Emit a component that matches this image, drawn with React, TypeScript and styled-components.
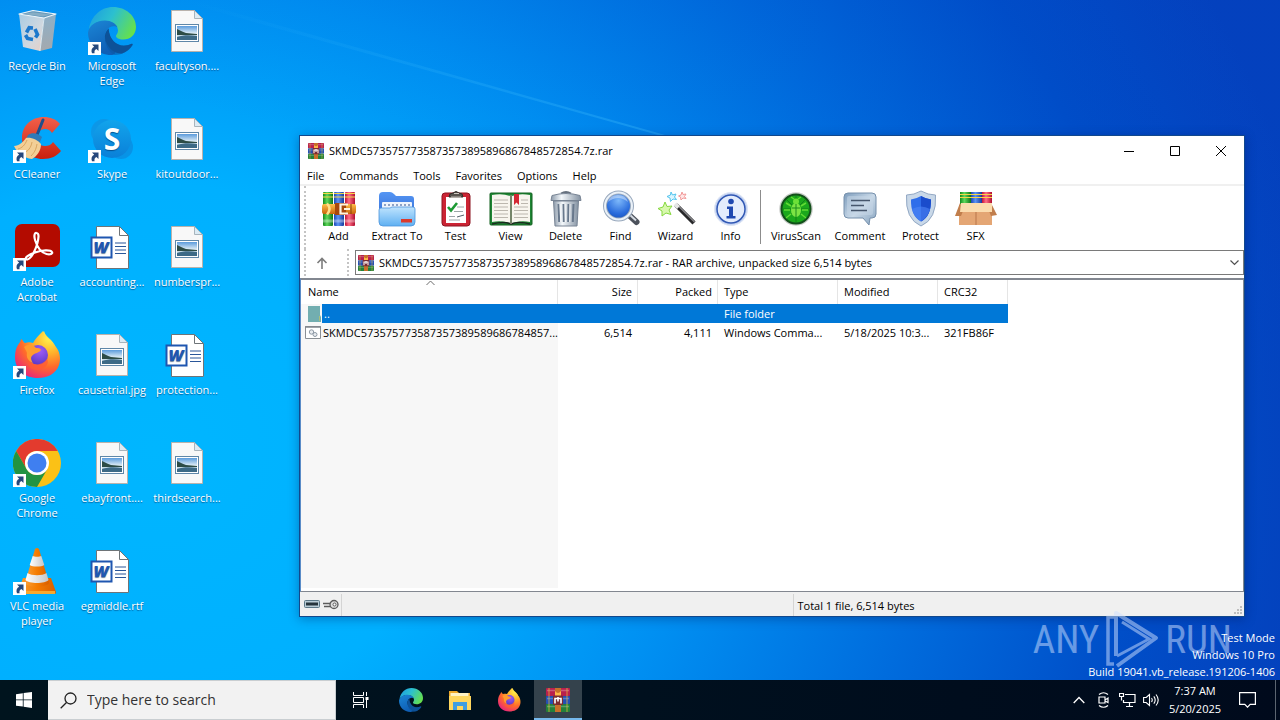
import React from "react";
import styled, { createGlobalStyle } from "styled-components";

const GlobalStyle = createGlobalStyle`
  * { box-sizing: border-box; }
  html, body { margin: 0; padding: 0; }
  body, button, select, input, table {
    font-family: "Open Sans", "Noto Sans", sans-serif;
    font-size: 11px;
    line-height: 15px;
  }
  button { border: 0; padding: 0; margin: 0; background: none; color: inherit; cursor: default; }
  svg { display: block; flex: none; }
`;

/* ---------- Desktop ---------- */

const Screen = styled.div`
  position: relative;
  display: flex;
  flex-direction: column;
  height: 100vh;
  overflow: hidden;
`;

const Desktop = styled.main`
  position: relative;
  flex: 1;
  min-height: 0;
  background:
    linear-gradient(16deg, transparent 60%, rgba(0, 70, 200, 0.16) 90%),
    radial-gradient(ellipse 92% 150% at 12% 66%, #00b6ff 0%, #00b0ff 26%, #0090f2 46%, #006cdd 66%, #004ec8 84%, #0440bc 100%);
`;

const LightRays = styled.svg`
  position: absolute;
  inset: 0;
  width: 100%;
  height: 100%;
`;

const IconGrid = styled.div`
  position: relative;
  display: grid;
  grid-auto-flow: column;
  grid-template-rows: repeat(6, 108px);
  grid-auto-columns: 74px;
  column-gap: 1px;
  justify-content: start;
`;

const DesktopIcon = styled.button`
  display: flex;
  flex-direction: column;
  align-items: center;
  gap: 3px;
  padding-top: 7px;
  color: #fff;
  text-shadow: 0 1px 1px rgba(0, 40, 90, 0.6);
`;

const IconArt = styled.span`
  position: relative;
  width: 48px;
  height: 48px;
`;

const ShortcutMark = styled.svg`
  position: absolute;
  left: 0;
  bottom: 0;
`;

const IconLabel = styled.span`
  white-space: pre;
  text-align: center;
`;

/* ---------- Archive window ---------- */

const Window = styled.section`
  position: absolute;
  top: 135px;
  left: 299px;
  right: 35px;
  bottom: 63px;
  display: flex;
  flex-direction: column;
  background: #fff;
  border: 1px solid #12488c;
  color: #000;
  box-shadow: 0 2px 10px rgba(0, 20, 80, 0.35);
`;

const TitleBar = styled.header`
  display: flex;
  align-items: center;
  height: 29px;
  padding-left: 8px;
`;

const Title = styled.h1`
  flex: 1;
  margin: 0;
  padding-left: 5px;
  font-size: 11px;
  font-weight: 400;
`;

const CaptionButton = styled.button`
  display: flex;
  align-items: center;
  justify-content: center;
  width: 46px;
  height: 29px;
`;

const MenuBar = styled.nav`
  display: flex;
  gap: 15px;
  height: 21px;
  padding: 3px 7px 0;
  border-bottom: 2px solid #f0f0f0;
`;

const MenuItem = styled.button`
  height: 15px;
`;

const ToolbarRow = styled.div`
  display: flex;
  align-items: center;
  height: 63px;
  margin-left: 4px;
  padding: 0 0 2px 5px;
  border-left: 2px dotted #c4c4c4;
`;

const ToolButton = styled.button<{ $width?: number }>`
  display: flex;
  flex-direction: column;
  align-items: center;
  width: ${(p) => p.$width ?? 55}px;
`;

const ToolDivider = styled.span`
  width: 1px;
  height: 54px;
  margin: 0 4px 0 2px;
  background: #8c8c8c;
`;

const AddressRow = styled.div`
  display: flex;
  align-items: center;
  height: 27px;
  margin-left: 4px;
  border-left: 2px dotted #c4c4c4;
`;

const UpButton = styled.button`
  display: flex;
  align-items: center;
  justify-content: center;
  width: 32px;
  height: 24px;
`;

const AddressGrip = styled.span`
  align-self: stretch;
  width: 8px;
  margin-left: 9px;
  border-left: 2px dotted #c4c4c4;
`;

const AddressBox = styled.div`
  flex: 1;
  display: flex;
  align-items: center;
  height: 25px;
  padding: 0 4px 0 2px;
  border: 1px solid #7a7a7a;
`;

const AddressSelect = styled.select`
  flex: 1;
  height: 20px;
  padding: 0 5px;
  border: 0;
  outline: 0;
  appearance: none;
  background: transparent;
  color: #000;
`;

const ListPane = styled.div`
  flex: 1;
  min-height: 0;
  margin-top: 2px;
  overflow: hidden;
  border: 1px solid #828790;
  border-left-color: #5a8cc8;
  border-top: 2px solid #828790;
  background: linear-gradient(#f7f7f7, #f7f7f7) 0 0 / 257px calc(100% - 3px) no-repeat #fff;
`;

const FileTable = styled.table`
  width: 707px;
  table-layout: fixed;
  border-spacing: 0;
`;

const HeadCell = styled.th<{ $align?: string; $sorted?: boolean }>`
  position: relative;
  height: 24px;
  padding: ${(p) => (p.$sorted ? "0 7px 2px" : "0 5px 2px 6px")};
  border-right: 1px solid #e5e5e5;
  background: #fff;
  font-weight: 400;
  text-align: ${(p) => p.$align ?? "left"};
`;

const SortMark = styled.svg`
  position: absolute;
  top: 0;
  left: 125px;
`;

const FileRow = styled.tr<{ $selected?: boolean }>`
  height: 19px;
  color: ${(p) => (p.$selected ? "#fff" : "#000")};
  background: ${(p) => (p.$selected ? "#0078d7" : "transparent")};
`;

const Cell = styled.td<{ $align?: string }>`
  padding: 0 6px;
  overflow: hidden;
  white-space: nowrap;
  text-overflow: ellipsis;
  text-align: ${(p) => p.$align ?? "left"};
`;

const NameCell = styled.td`
  padding: 0;
`;

const NameContent = styled.div`
  display: flex;
  align-items: center;
  height: 19px;
`;

const NameIcon = styled.span`
  display: flex;
  align-items: center;
  justify-content: flex-end;
  width: 21px;
  height: 19px;
  background: #f7f7f7;
`;

const NameText = styled.span`
  flex: 1;
  padding-left: 2px;
  white-space: nowrap;
`;

const StatusBar = styled.footer`
  display: flex;
  align-items: stretch;
  height: 24px;
  padding-top: 2px;
  background: #f0f0f0;
`;

const StatusIcons = styled.div`
  display: flex;
  gap: 3px;
  width: 42px;
  padding: 5px 0 0 4px;
  border-right: 1px solid #d4d4d4;
`;

const StatusPart = styled.div`
  flex: 1;
  display: flex;
  align-items: center;
  justify-content: space-between;
  padding-left: 4px;
  & + & { border-left: 1px solid #d4d4d4; }
`;

const SizeGrip = styled.svg`
  align-self: flex-end;
`;

/* ---------- Watermarks ---------- */

const Brand = styled.div`
  position: absolute;
  right: 48px;
  bottom: 10px;
  display: flex;
  align-items: center;
  gap: 6px;
  height: 60px;
  color: #cfe0ff;
  opacity: 0.5;
  font-family: "Roboto Condensed", "Liberation Sans Narrow", Roboto, sans-serif;
  font-size: 39px;
  font-weight: 400;
  line-height: 60px;
`;

const BuildInfo = styled.div`
  position: absolute;
  right: 5px;
  bottom: 0;
  color: #fff;
  text-align: right;
  line-height: 17px;
`;

/* ---------- Taskbar ---------- */

const Taskbar = styled.footer`
  display: flex;
  align-items: stretch;
  height: 40px;
  background: linear-gradient(to right, #00141e, #00101e 50%, #000a1c);
  color: #fff;
`;

const TaskButton = styled.button<{ $active?: boolean }>`
  display: flex;
  align-items: center;
  justify-content: center;
  width: 48px;
  border-bottom: 2px solid ${(p) => (p.$active ? "#76b9ed" : "transparent")};
  border-top: 2px solid ${(p) => (p.$active ? "#34424c" : "transparent")};
  background: ${(p) => (p.$active ? "#34424c" : "transparent")};
`;

const SearchBox = styled.label`
  display: flex;
  align-items: center;
  gap: 10px;
  width: 288px;
  padding-left: 12px;
  background: #f2f2f2;
  border: 1px solid #c9ced1;
  border-left: 0;
`;

const SearchInput = styled.input`
  flex: 1;
  min-width: 0;
  padding: 0;
  border: 0;
  outline: 0;
  background: transparent;
  font-size: 14px;
  line-height: 20px;
  &::placeholder { color: #333; opacity: 1; }
`;

const TaskApps = styled.div`
  flex: 1;
  display: flex;
  gap: 1px;
  padding-left: 3px;
`;

const Tray = styled.div`
  display: flex;
  align-items: stretch;
`;

const TrayButton = styled.button`
  display: flex;
  align-items: center;
  justify-content: center;
  width: 24px;
`;

const Clock = styled.button`
  display: flex;
  flex-direction: column;
  align-items: center;
  justify-content: center;
  width: 64px;
  line-height: 18px;
`;

const NotifyButton = styled(TrayButton)`
  width: 49px;
  border-right: 1px solid #5c6570;
  margin-right: 4px;
  padding-right: 8px;
`;

/* ---------- Desktop art ---------- */

const Shortcut = () => (
  <ShortcutMark width="13" height="13" viewBox="0 0 13 13" aria-hidden="true">
    <rect width="13" height="13" fill="#fff" />
    <path d="M4 2.500h6.500V9L8.400 7C6.600 8 6.200 9.200 6.600 11.300H4C2.800 8.300 3.800 6 6.200 4.800z" fill="#26487c" />
  </ShortcutMark>
);

const RecycleBinArt = () => (
  <svg width="48" height="48" viewBox="0 0 48 48">
    <defs>
      <linearGradient id="binL" x1="0" y1="0" x2="1" y2="1">
        <stop offset="0" stopColor="#a9cbe2" /><stop offset=".6" stopColor="#d0d8e0" /><stop offset="1" stopColor="#e8cfc4" />
      </linearGradient>
      <linearGradient id="binR" x1="0" y1="0" x2="0" y2="1">
        <stop offset="0" stopColor="#8db0c8" /><stop offset="1" stopColor="#a4a9ae" />
      </linearGradient>
    </defs>
    <path d="M6 7 31 10 27 44 10 40z" fill="url(#binL)" />
    <path d="M31 10 43 7 39 41 27 44z" fill="url(#binR)" />
    <path d="M6 7 20 3.500 43 7 31 11z" fill="#5f96bb" stroke="#eef6fb" strokeWidth="1.200" strokeLinejoin="round" />
    <path d="M10 7 20 5.200 38 7.400 30 9.400z" fill="#87adc4" />
    <path d="M31 11 27 44" stroke="#f2f6f8" strokeWidth=".8" />
    <g fill="none" stroke="#1c78cc" strokeWidth="3.600">
      <path d="M13.500 25.500 16.200 20.700 20 21" /><path d="M22 22 24.500 27.500 22.500 30.500" /><path d="M20 32.500 14.500 31.500 12.500 28" />
    </g>
  </svg>
);

const EdgeArt = ({ size = 48 }: { size?: number }) => (
  <svg width={size} height={size} viewBox="0 0 48 48">
    <defs>
      <linearGradient id="edTop" x1="0" y1=".2" x2="1" y2=".6">
        <stop offset="0" stopColor="#1d9fe0" /><stop offset=".45" stopColor="#2cc0cf" /><stop offset="1" stopColor="#66e04c" />
      </linearGradient>
      <linearGradient id="edLeft" x1="0" y1="0" x2=".4" y2="1">
        <stop offset="0" stopColor="#1b86d6" /><stop offset="1" stopColor="#0f5fb5" />
      </linearGradient>
    </defs>
    <path d="M1 22C3 9 13 0 25 0 38 0 48 9 48 20c0 8-6 12.500-12.500 12.500-5 0-7.500-1.800-7.500-3.500 0-1.300 2-2.500 2-5.500 0-5-5.500-9.500-13-9.500C9 14 3.500 17.500 1 22z" fill="url(#edTop)" />
    <path d="M17 13.500c6 0 11 3 12.600 7-3-2.500-9.600-1-11.600 4-3 7.500 2 15.500 9 19 1.500 2.500-1 4.500-4 4.500C10 48 0 37.500 0 25.500 1 19 8 13.500 17 13.500z" fill="url(#edLeft)" />
    <path d="M20.500 21.500C17 25 16 30 18 35c3 7.500 9.500 12 16 11.500 4.500-1.500 8.500-5 10.500-8.500.6-1.200-.6-1.600-1.500-1-9.500 4.500-21 0-22.500-15.500z" fill="#114a8b" />
    <path d="M20.500 21.500c.5 13 10.500 20.500 22.500 15.500l1.500 1c-3 5.500-10 10-18 10-2-1-7-5-9-12-1.500-6 .5-11.500 3-14.500z" fill="#0c59a4" opacity=".6" />
  </svg>
);

const CCleanerArt = () => (
  <svg width="48" height="48" viewBox="0 0 48 48">
    <defs>
      <linearGradient id="ccR" x1="0" y1="0" x2="0" y2="1">
        <stop offset="0" stopColor="#f2604a" /><stop offset="1" stopColor="#c8200e" />
      </linearGradient>
    </defs>
    <path d="M47 9C43 4 37 2 31 2 18 2 9 11 9 23s8 21 21 21c8 0 14-3 18-8l-8-9c-2 3-5 4-8 4-5 0-8-3-8-8s3-9 8-9c3 0 5 1 7 4z" fill="url(#ccR)" />
    <path d="m30 5-6 15" stroke="#1f4f8c" strokeWidth="3" strokeLinecap="round" />
    <path d="M15 20c4-3 10-2 14 2l-3 7-13-5z" fill="#2f7ab8" />
    <path d="M13 23c5-1 12 2 15 6 0 7-4 12-9 15C11 43 4 38 1 31c5 0 9-4 12-8z" fill="#f3cf96" />
    <path d="M14 25c-2 5-5 8-9 9M19 27c-1 6-4 9-8 11M24 29c-1 6-3 9-6 12" stroke="#d9a560" fill="none" />
  </svg>
);

const SkypeArt = () => (
  <svg width="48" height="48" viewBox="0 0 48 48">
    <defs>
      <linearGradient id="sky" x1="0" y1="0" x2="0" y2="1">
        <stop offset="0" stopColor="#12a4ec" /><stop offset="1" stopColor="#0a80d8" />
      </linearGradient>
    </defs>
    <circle cx="16" cy="17" r="13" fill="#0f94e2" opacity=".8" />
    <circle cx="33" cy="32" r="12" fill="#0a8de0" opacity=".8" />
    <circle cx="24" cy="24" r="19" fill="url(#sky)" />
    <text x="24" y="35" textAnchor="middle" fontFamily="Open Sans, sans-serif" fontWeight="700" fontSize="30" fill="#fff">S</text>
  </svg>
);

const AcrobatArt = () => (
  <svg width="48" height="48" viewBox="0 0 48 48">
    <rect x="2" y="1" width="45" height="43" rx="7" fill="#b30b00" />
    <path d="M23.500 10c-2-.5-2.800 3-1.300 7.500 2 6.500 5.500 12 11.300 13.500 4 1 6.500-.5 5.500-2-1.500-2.500-10-2-17 .5-7 2.300-10 5-9 6.500 1.200 1.800 5-.8 8-7 2.500-5 4.300-11.500 4.500-15.500.1-2-.8-3.300-2-3.500z" fill="none" stroke="#fff" strokeWidth="2.200" strokeLinejoin="round" />
  </svg>
);

const FirefoxArt = ({ size = 48 }: { size?: number }) => (
  <svg width={size} height={size} viewBox="0 0 48 48">
    <defs>
      <radialGradient id="ffBody" cx=".75" cy=".15" r=".95">
        <stop offset="0" stopColor="#fff44f" /><stop offset=".35" stopColor="#ffb02a" /><stop offset=".65" stopColor="#ff6a2b" /><stop offset="1" stopColor="#e8247c" />
      </radialGradient>
      <radialGradient id="ffCore" cx=".6" cy=".3" r=".7">
        <stop offset="0" stopColor="#a05cf5" /><stop offset="1" stopColor="#5b3ac8" />
      </radialGradient>
    </defs>
    <path d="M31 0c-4 4-5 7-4 11l12 8c2 2 3 4 4 1 0-4-2-8-5-11-3-3-6-5-7-9z" fill="#ffe14a" />
    <path d="M5 14C7 11 8 10 8 8c2 1 3 4 4 4 3-1 5-1 8 0 2-4 6-8 10-12 1 7 9 9 13 16 4 5 5 12 3 18-3 9-12 13-21 13C11 47 2 38 2 26c0-5 1-9 3-12z" fill="url(#ffBody)" />
    <circle cx="25" cy="24" r="10" fill="url(#ffCore)" />
    <path d="M11 16c4-3 9-3 12 1 2 0 4 0 5 2-2 3-6 3-8 5-3 2-2 5 0 8-5-2-7-6-6-10-1-3-2-4-3-6z" fill="#ff9b2e" />
    <path d="M15 29c4 6 14 6 19-1 3 4-2 11-10 11-6 0-10-4-9-10z" fill="#ff5b36" opacity=".75" />
  </svg>
);

const ChromeArt = () => (
  <svg width="48" height="48" viewBox="0 0 48 48">
    <circle cx="24" cy="24" r="24" fill="#fbc116" />
    <path d="M3.200 12A24 24 0 0 1 44.800 12H24a12 12 0 0 0-10.400 18z" fill="#e33b2e" />
    <path d="M3.200 12A24 24 0 0 0 24 48l10.400-18a12 12 0 0 1-20.800 0z" fill="#229342" />
    <circle cx="24" cy="24" r="12" fill="#fff" />
    <circle cx="24" cy="24" r="9.500" fill="#3f7ff0" />
  </svg>
);

const VlcArt = () => (
  <svg width="48" height="48" viewBox="0 0 48 48">
    <defs>
      <linearGradient id="vlc" x1="0" y1="0" x2="1" y2="0">
        <stop offset="0" stopColor="#f9a03a" /><stop offset=".5" stopColor="#f57c00" /><stop offset="1" stopColor="#d85f00" />
      </linearGradient>
      <linearGradient id="vlcW" x1="0" y1="0" x2="1" y2="0">
        <stop offset="0" stopColor="#fff" /><stop offset="1" stopColor="#c6c6c6" />
      </linearGradient>
    </defs>
    <path d="M10 31h28l5 14a2 2 0 0 1-1 2H6a2 2 0 0 1-1-2z" fill="url(#vlc)" />
    <path d="M6 44h36v3H6z" fill="#f8a92e" />
    <path d="M22 2q2-2 4 0l10 34c-3 5-21 5-24 0z" fill="url(#vlc)" />
    <path d="m19.700 9-3 9c3 2 11.600 2 14.600 0l-3-9c-2 1-6.600 1-8.600 0z" fill="url(#vlcW)" />
    <path d="m14.500 26-2 7c3 4 20 4 23 0l-2-7c-4 3-15 3-19 0z" fill="url(#vlcW)" />
  </svg>
);

const PhotoArt = () => (
  <svg width="48" height="48" viewBox="0 0 48 48">
    <defs>
      <linearGradient id="sky2" x1="0" y1="0" x2="0" y2="1">
        <stop offset="0" stopColor="#5b9bdc" /><stop offset=".55" stopColor="#e4f0f6" /><stop offset="1" stopColor="#7fa8c0" />
      </linearGradient>
    </defs>
    <path d="M8.500 3.500h23l8 8v33h-31z" fill="#f8f8f8" stroke="#b9b2ac" />
    <path d="M31.500 3.500v8h8z" fill="#dcebf4" stroke="#a8b4bc" />
    <rect x="12.500" y="17.500" width="23" height="17" fill="#fff" stroke="#5f87a8" />
    <rect x="14" y="19" width="20" height="14" fill="url(#sky2)" />
    <path d="M14 22c3 1 5 3 9 4 4 0 7 1 11 1v1H14z" fill="#2d4c46" />
    <path d="M14 30c6-2 13-2 20-1v4H14z" fill="#3d6a86" />
  </svg>
);

const WordArt = () => (
  <svg width="48" height="48" viewBox="0 0 48 48">
    <path d="M8.500 3.500h23l9 9v33h-32z" fill="#fff" stroke="#6e7478" />
    <path d="M31.500 3.500v9h9z" fill="#fff" stroke="#6e7478" />
    <path d="M27 20h11M27 23.500h11M27 27h11M27 30.500h11" stroke="#2a5699" strokeWidth="1.200" />
    <rect x="3.500" y="14.500" width="20" height="20" fill="#fff" stroke="#1f56b0" strokeWidth="2" />
    <text x="13" y="30" textAnchor="middle" fontFamily="Open Sans, sans-serif" fontStyle="italic" fontWeight="800" fontSize="16" fill="#1f56b0">W</text>
  </svg>
);

/* ---------- Toolbar art ---------- */

const RarArt = ({ size = 16 }: { size?: number }) => (
  <svg width={size} height={size} viewBox="0 0 24 24">
    <rect x="0" y="0" width="24" height="8" rx="1" fill="#b8204c" />
    <rect x="0" y="8" width="24" height="8" rx="1" fill="#2450b4" />
    <rect x="0" y="16" width="24" height="8" rx="1" fill="#23803a" />
    <path d="M1 2.500h22M1 10.500h22M1 18.500h22" stroke="#fff" strokeOpacity=".25" strokeWidth="1.500" />
    <path d="M3 0v24M21 0v24" stroke="#e6b93c" strokeOpacity=".6" strokeWidth="1.200" />
    <rect x="9" y="0" width="6" height="24" fill="#c8702a" />
    <path d="M9 3q3 4 6 0v5H9z" fill="#ffb848" />
    <rect x="7" y="7.500" width="10" height="9.500" rx="1" fill="#7c2c30" />
    <path d="M9 15.500v-5h6v5M12 9v4.500" stroke="#fff" strokeWidth="1.600" fill="none" />
  </svg>
);

const bookDefs = (
  <defs>
    <linearGradient id="bkG" x1="0" y1="0" x2="1" y2="0"><stop offset="0" stopColor="#128a1c" /><stop offset=".4" stopColor="#5fd85c" /><stop offset="1" stopColor="#0e7416" /></linearGradient>
    <linearGradient id="bkB" x1="0" y1="0" x2="1" y2="0"><stop offset="0" stopColor="#1c46b4" /><stop offset=".4" stopColor="#5c94f4" /><stop offset="1" stopColor="#173a9c" /></linearGradient>
    <linearGradient id="bkR" x1="0" y1="0" x2="1" y2="0"><stop offset="0" stopColor="#c01238" /><stop offset=".4" stopColor="#ff6e86" /><stop offset="1" stopColor="#b00e30" /></linearGradient>
    <linearGradient id="bkO" x1="0" y1="0" x2="0" y2="1"><stop offset="0" stopColor="#ffc04a" /><stop offset="1" stopColor="#c8640c" /></linearGradient>
  </defs>
);

const AddArt = () => (
  <svg width="44" height="38" viewBox="0 0 44 38">
    {bookDefs}
    <rect x="6" y="2" width="10" height="34" rx="1" fill="url(#bkG)" />
    <rect x="17" y="2" width="10" height="34" rx="1" fill="url(#bkB)" />
    <rect x="28" y="2" width="10" height="34" rx="1" fill="url(#bkR)" />
    <path d="M6 3.500h10M17 3.500h10M28 3.500h10M6 7h10M17 7h10M28 7h10" stroke="#f6d548" strokeWidth="1.200" />
    <path d="M6 31h10M17 31h10M28 31h10" stroke="#fff" strokeOpacity=".35" strokeWidth="3" />
    <rect x="5" y="14" width="34" height="10" rx="2" fill="url(#bkO)" />
    <path d="M10 13.500q5 5.500 0 11" stroke="#ffe08a" strokeWidth="2.500" fill="none" />
    <rect x="18" y="13" width="11" height="12" fill="#a8480c" />
    <path d="M31 14.500h-7.500v9H31M27 19h6" stroke="#fff4e0" strokeWidth="2.200" fill="none" />
    <path d="M34 14v10" stroke="#8c4208" />
  </svg>
);

const ExtractArt = () => (
  <svg width="44" height="38" viewBox="0 0 44 38">
    <defs>
      <linearGradient id="fdA" x1="0" y1="0" x2="0" y2="1"><stop offset="0" stopColor="#5596f4" /><stop offset="1" stopColor="#2f66d0" /></linearGradient>
      <linearGradient id="fdB" x1="0" y1="0" x2="0" y2="1"><stop offset="0" stopColor="#bfe4fe" /><stop offset="1" stopColor="#5fb0f2" /></linearGradient>
    </defs>
    <path d="M4 6q0-4 4-4h7q2 0 4 2l2 2h15q3 0 3 3v22H4z" fill="url(#fdA)" />
    <rect x="7" y="12" width="30" height="11" rx="1" fill="#eef4fc" />
    <path d="M9 15h26" stroke="#6d86b4" strokeWidth="1.500" strokeDasharray="2 2" />
    <path d="M4 20q0-2 2-2h9l2-1h21q2 0 2 2v13q0 4-4 4H8q-4 0-4-4z" fill="url(#fdB)" stroke="#4b94dc" strokeWidth=".8" />
    <rect x="26" y="29" width="11" height="3.500" fill="#dc3a2c" />
  </svg>
);

const TestArt = () => (
  <svg width="44" height="38" viewBox="0 0 44 38">
    <rect x="8" y="3" width="28" height="33" rx="3" fill="#cc2434" stroke="#8c1420" />
    <path d="M12 7h20v26H12z" fill="#fff" />
    <path d="M15 7q0-4 4-4 3-3 6 0 4 0 4 4z" fill="#57534e" stroke="#302c28" />
    <path d="M17 7h10M20 3.500h5" stroke="#cfc8c0" />
    <path d="m14 17 3 3.500 6-7.500" stroke="#1d9a34" strokeWidth="2.600" fill="none" />
    <path d="M23 17h7M20 21.500h9M15 26.500h6M15 30h11" stroke="#9ca6a8" />
    <path d="m23 27 7-2" stroke="#52606a" />
  </svg>
);

const ViewArt = () => (
  <svg width="44" height="38" viewBox="0 0 44 38">
    <rect x="1" y="3" width="42" height="32" rx="1" fill="#1f8634" stroke="#12601f" />
    <path d="M3 5q10-2 18 1v27q-9-3-18-1zM41 5q-10-2-18 1v27q9-3 18-1z" fill="#f8f5ee" />
    <path d="M3 34q12-3 19 0 8-3 19 0" stroke="#1c2a20" strokeWidth="1.500" fill="none" />
    <path d="M22 5v29" stroke="#8d8678" strokeWidth="1.600" />
    <path d="M5 10h14M5 13.500h14M5 17h14M5 20.500h14M5 24h14M5 27.500h14M25 17h14M25 20.500h14M25 24h14M25 27.500h14M32 10h7M32 13.500h7" stroke="#b4b0a6" strokeWidth=".9" />
    <path d="M25 4h5v11l-2.500-2.500L25 15z" fill="#d42834" />
  </svg>
);

const DeleteArt = () => (
  <svg width="44" height="38" viewBox="0 0 44 38">
    <defs>
      <linearGradient id="can" x1="0" y1="0" x2="1" y2="0"><stop offset="0" stopColor="#8c9aaa" /><stop offset=".35" stopColor="#f4f8fb" /><stop offset="1" stopColor="#8492a2" /></linearGradient>
    </defs>
    <path d="M17 3.500q5-3 10 0" stroke="#66717e" strokeWidth="2" fill="none" />
    <path d="M8 5.500q14-4 28 0l1 5H7z" fill="url(#can)" stroke="#788494" />
    <path d="M9.500 11h25l-1.500 25h-22z" fill="url(#can)" stroke="#788494" />
    <path d="m14.500 14 .7 18M19.500 14l.3 18M24.500 14l-.3 18M29.500 14l-.7 18" stroke="#68788c" strokeWidth="2" />
    <path d="m16 14 .7 18M21 14l.3 18M26 14l-.3 18" stroke="#fff" strokeWidth=".8" />
  </svg>
);

const FindArt = () => (
  <svg width="44" height="38" viewBox="0 0 44 38">
    <defs>
      <radialGradient id="lens" cx=".5" cy=".3" r=".8"><stop offset="0" stopColor="#7db8fa" /><stop offset=".6" stopColor="#2a6cdc" /><stop offset="1" stopColor="#0f48b0" /></radialGradient>
    </defs>
    <path d="m31 26 6.500 6" stroke="#4c525c" strokeWidth="6" strokeLinecap="round" />
    <path d="m30 24 7 6.500" stroke="#d4dae2" strokeWidth="2" />
    <circle cx="19.500" cy="16" r="13.500" fill="url(#lens)" stroke="#98a8bc" strokeWidth="4" />
    <circle cx="19.500" cy="16" r="13.500" fill="none" stroke="#eaf1f8" strokeWidth="2" />
    <path d="M9 12q10-8 20 0-2-7-10-7t-10 7z" fill="#fff" opacity=".4" />
  </svg>
);

const WizardArt = () => (
  <svg width="44" height="38" viewBox="0 0 44 38">
    <path d="m22 15 18 18" stroke="#28282a" strokeWidth="4.500" />
    <path d="m22.500 14 18 18" stroke="#8d8d90" strokeWidth="1.200" />
    <path d="m21 14 3.500 3.500" stroke="#e6e6e6" strokeWidth="4" />
    <path d="m11 12 2 4.500 5-.5-3 4 2 4.500-5-1.500-4 3v-5l-4-2.500 5-1.500z" fill="#d8f8ae" stroke="#86d840" />
    <path d="m17 2 1.500 3 3.500-1-1.500 3 2 2.500-3.500-.5-2.500 2.500-.5-3.500-3-1.500 3.500-1.500z" fill="#dcf6ff" stroke="#52c4ee" />
    <path d="m28 2 1 2.500 3-.5-1.500 2.500 1.500 2-3-.5-2 2-.5-3-2-1 2.500-1z" fill="#ffe6e6" stroke="#f29a9a" />
  </svg>
);

const InfoArt = () => (
  <svg width="44" height="38" viewBox="0 0 44 38">
    <circle cx="22" cy="19" r="16.500" fill="#c3d2f2" stroke="#dfe6f4" />
    <circle cx="22" cy="19" r="14" fill="#e4ecfc" stroke="#3158b4" strokeWidth="1.500" />
    <circle cx="22" cy="11.500" r="2.800" fill="#1f48b0" />
    <path d="M18 16.500h6v9.500h2.500v2.500h-9V26H20v-7h-2z" fill="#1f48b0" />
  </svg>
);

const VirusArt = () => (
  <svg width="44" height="38" viewBox="0 0 44 38">
    <circle cx="22" cy="19" r="15.500" fill="#1ba81c" stroke="#c9ccc9" strokeWidth="2.500" />
    <circle cx="22" cy="19" r="14.500" fill="none" stroke="#12501a" strokeWidth="2" />
    <path d="M22 5v28M8 19h28M12 9l20 20M32 9 12 29" stroke="#0f7a14" strokeWidth=".8" />
    <ellipse cx="22" cy="20" rx="5" ry="7" fill="#7ce444" />
    <circle cx="22" cy="11.500" r="3" fill="#6ce038" />
    <path d="M17 16l-5-3M16 20h-6M17 24l-5 4M27 16l5-3M28 20h6M27 24l5 4M20 9l-3-2M24 9l3-2" stroke="#62dc34" strokeWidth="1.500" />
    <path d="M22 14v13M18 18h8" stroke="#1b8c1c" />
  </svg>
);

const CommentArt = () => (
  <svg width="44" height="38" viewBox="0 0 44 38">
    <defs>
      <linearGradient id="cm" x1="0" y1="0" x2="1" y2="1"><stop offset="0" stopColor="#7d9cbc" /><stop offset=".5" stopColor="#c9d9e8" /><stop offset="1" stopColor="#85a2be" /></linearGradient>
    </defs>
    <path d="M10 3h24q4 0 4 4v17q0 4-4 4l-2 0-1 7-6-7H10q-4 0-4-4V7q0-4 4-4z" fill="url(#cm)" stroke="#7690ac" />
    <rect x="9" y="6" width="26" height="19" rx="2" fill="#c4d6e6" opacity=".55" />
    <path d="M13 10.500h19M13 15.500h13M13 20.500h16" stroke="#46566c" strokeWidth="1.700" />
  </svg>
);

const ProtectArt = () => (
  <svg width="44" height="38" viewBox="0 0 44 38">
    <path d="M22 1q7 4 14.500 4 1.500 24-14.500 31Q6 29 7.500 5 15 5 22 1z" fill="#c9d8e8" stroke="#92a8c4" />
    <path d="M22 6q5 3 10 3.500Q32.500 26 22 31.500 11.500 26 12 9.500 17 9 22 6z" fill="#2f6eea" />
    <path d="M22 6q5 3 10 3.500Q32.500 26 22 31.500z" fill="#1a4ccc" />
    <path d="M13 19q9-5 18 0-2 8-9 12.500Q15 27 13 19z" fill="#4f86f6" opacity=".6" />
  </svg>
);

const SfxArt = () => (
  <svg width="44" height="38" viewBox="0 0 44 38">
    {bookDefs}
    <rect x="6" y="2" width="11" height="14" fill="url(#bkG)" />
    <rect x="17" y="2" width="11" height="14" fill="url(#bkB)" />
    <rect x="28" y="2" width="10" height="14" fill="url(#bkR)" />
    <path d="M6 4.500h32M6 7.500h32" stroke="#f6d548" strokeWidth="1" />
    <path d="m5 15 5-2h28l-1 22H5z" fill="#dca070" />
    <path d="M5 20h33v15H5z" fill="#e4a674" />
    <path d="m6 13-5 13h6l2-5zM37 13l6 12-6 1-2-5z" fill="#c17e4c" />
    <path d="M7 13h31v9H6z" fill="#fbdcae" />
    <path d="M22 22v13" stroke="#b9764a" />
  </svg>
);

/* ---------- Data ---------- */

type Item = { label: string; art: React.ReactNode; shortcut?: boolean };

const desktopItems: Item[] = [
  { label: "Recycle Bin", art: <RecycleBinArt /> },
  { label: "CCleaner", art: <CCleanerArt />, shortcut: true },
  { label: "Adobe\nAcrobat", art: <AcrobatArt />, shortcut: true },
  { label: "Firefox", art: <FirefoxArt />, shortcut: true },
  { label: "Google\nChrome", art: <ChromeArt />, shortcut: true },
  { label: "VLC media\nplayer", art: <VlcArt />, shortcut: true },
  { label: "Microsoft\nEdge", art: <EdgeArt />, shortcut: true },
  { label: "Skype", art: <SkypeArt />, shortcut: true },
  { label: "accounting...", art: <WordArt /> },
  { label: "causetrial.jpg", art: <PhotoArt /> },
  { label: "ebayfront....", art: <PhotoArt /> },
  { label: "egmiddle.rtf", art: <WordArt /> },
  { label: "facultyson....", art: <PhotoArt /> },
  { label: "kitoutdoor...", art: <PhotoArt /> },
  { label: "numberspr...", art: <PhotoArt /> },
  { label: "protection...", art: <WordArt /> },
  { label: "thirdsearch...", art: <PhotoArt /> },
];

type Tool = { label: string; art: React.ReactNode; width?: number };

const archiveTools: Tool[] = [
  { label: "Add", art: <AddArt /> },
  { label: "Extract To", art: <ExtractArt />, width: 62 },
  { label: "Test", art: <TestArt /> },
  { label: "View", art: <ViewArt /> },
  { label: "Delete", art: <DeleteArt /> },
  { label: "Find", art: <FindArt /> },
  { label: "Wizard", art: <WizardArt /> },
  { label: "Info", art: <InfoArt /> },
];

const extraTools: Tool[] = [
  { label: "VirusScan", art: <VirusArt />, width: 62 },
  { label: "Comment", art: <CommentArt />, width: 66 },
  { label: "Protect", art: <ProtectArt /> },
  { label: "SFX", art: <SfxArt /> },
];

const menus = ["File", "Commands", "Tools", "Favorites", "Options", "Help"];

const archiveName = "SKMDC5735757735873573895896867848572854.7z.rar";

const renderTool = (t: Tool) => (
  <ToolButton key={t.label} $width={t.width}>
    {t.art}
    {t.label}
  </ToolButton>
);

/* ---------- Sections ---------- */

const ArchiveWindow = () => (
  <Window aria-label={archiveName}>
    <TitleBar>
      <RarArt />
      <Title>{archiveName}</Title>
      <CaptionButton aria-label="Minimize">
        <svg width="10" height="10" viewBox="0 0 10 10"><path d="M0 5.500h10" stroke="#000" /></svg>
      </CaptionButton>
      <CaptionButton aria-label="Maximize">
        <svg width="10" height="10" viewBox="0 0 10 10"><path d="M.5.5h9v9h-9z" stroke="#000" fill="none" /></svg>
      </CaptionButton>
      <CaptionButton aria-label="Close">
        <svg width="10" height="10" viewBox="0 0 10 10"><path d="m0 0 10 10M10 0 0 10" stroke="#000" /></svg>
      </CaptionButton>
    </TitleBar>
    <MenuBar>
      {menus.map((m) => <MenuItem key={m}>{m}</MenuItem>)}
    </MenuBar>
    <ToolbarRow>
      {archiveTools.map(renderTool)}
      <ToolDivider />
      {extraTools.map(renderTool)}
    </ToolbarRow>
    <AddressRow>
      <UpButton aria-label="Up one level">
        <svg width="12" height="12" viewBox="0 0 12 12"><path d="M6 12V1.500M1.500 6 6 1.500 10.500 6" stroke="#7c7c7c" strokeWidth="1.600" fill="none" /></svg>
      </UpButton>
      <AddressGrip />
      <AddressBox>
        <RarArt />
        <AddressSelect aria-label="Archive path">
          <option>{archiveName} - RAR archive, unpacked size 6,514 bytes</option>
        </AddressSelect>
        <svg width="9" height="6" viewBox="0 0 9 6"><path d="m.5.5 4 4 4-4" stroke="#505050" strokeWidth="1.200" fill="none" /></svg>
      </AddressBox>
    </AddressRow>
    <ListPane>
      <FileTable>
        <colgroup>
          <col width="257" /><col width="80" /><col width="80" /><col width="120" /><col width="100" /><col width="70" />
        </colgroup>
        <thead>
          <tr>
            <HeadCell $sorted>
              Name
              <SortMark width="9" height="6" viewBox="0 0 9 6"><path d="m.5 5 4-4 4 4" stroke="#6c6c6c" fill="none" /></SortMark>
            </HeadCell>
            <HeadCell $align="right">Size</HeadCell>
            <HeadCell $align="right">Packed</HeadCell>
            <HeadCell>Type</HeadCell>
            <HeadCell>Modified</HeadCell>
            <HeadCell>CRC32</HeadCell>
          </tr>
        </thead>
        <tbody>
          <FileRow $selected>
            <NameCell>
              <NameContent>
                <NameIcon>
                  <svg width="15" height="16" viewBox="0 0 15 16"><path d="M1 0h12v9l1 2v5H1z" fill="#72aeb0" /><path d="M12.500 10v5" stroke="#a8bf7a" /></svg>
                </NameIcon>
                <NameText>..</NameText>
              </NameContent>
            </NameCell>
            <Cell /><Cell /><Cell>File folder</Cell><Cell /><Cell />
          </FileRow>
          <FileRow>
            <NameCell>
              <NameContent>
                <NameIcon>
                  <svg width="16" height="13" viewBox="0 0 16 13">
                    <path d="M.5.5h15v12H.5z" fill="#fff" stroke="#8a8f94" />
                    <path d="M0 1h16" stroke="#80868c" strokeWidth="1.500" />
                    <circle cx="6.500" cy="6" r="2.200" stroke="#8f9aa6" fill="#e8ecf0" /><circle cx="10" cy="8.500" r="2" stroke="#8f9aa6" fill="#e8ecf0" />
                  </svg>
                </NameIcon>
                <NameText>SKMDC573575773587357389589686784857...</NameText>
              </NameContent>
            </NameCell>
            <Cell $align="right">6,514</Cell>
            <Cell $align="right">4,111</Cell>
            <Cell>Windows Comma...</Cell>
            <Cell>5/18/2025 10:3...</Cell>
            <Cell>321FB86F</Cell>
          </FileRow>
        </tbody>
      </FileTable>
    </ListPane>
    <StatusBar>
      <StatusIcons>
        <svg width="16" height="10" viewBox="0 0 16 10"><rect x=".5" y="1.500" width="15" height="7" rx="1" fill="#b8ccd6" stroke="#5c7888" /><path d="M2 5h12" stroke="#26343c" strokeWidth="3" /></svg>
        <svg width="16" height="11" viewBox="0 0 16 11"><path d="M0 4.500h8M1 7.500h7" stroke="#5c5c5c" strokeWidth="1.500" /><circle cx="11" cy="5.500" r="4" fill="#dedede" stroke="#5c5c5c" strokeWidth="1.300" /><circle cx="11.500" cy="5.500" r="1.500" fill="#fff" stroke="#5c5c5c" /></svg>
      </StatusIcons>
      <StatusPart />
      <StatusPart>
        Total 1 file, 6,514 bytes
        <SizeGrip width="11" height="11" viewBox="0 0 11 11"><path d="M7 1h2v2H7zM4 4h2v2H4zM7 4h2v2H7zM1 7h2v2H1zM4 7h2v2H4zM7 7h2v2H7z" fill="#bdbdbd" /></SizeGrip>
      </StatusPart>
    </StatusBar>
  </Window>
);

const TaskbarSection = () => (
  <Taskbar>
    <TaskButton aria-label="Start">
      <svg width="16" height="16" viewBox="0 0 16 16"><path d="M0 2.200 6.800 1.200v6.300H0zM7.600 1.100 16 0v7.500H7.600zM0 8.300h6.800v6.300L0 13.700zM7.600 8.300H16V16l-8.400-1.200z" fill="#fff" /></svg>
    </TaskButton>
    <SearchBox>
      <svg width="17" height="17" viewBox="0 0 17 17"><circle cx="10.500" cy="6.500" r="5.500" stroke="#222" strokeWidth="1.300" fill="none" /><path d="M6.500 10.500.7 16.300" stroke="#222" strokeWidth="1.300" /></svg>
      <SearchInput type="text" aria-label="Search" placeholder="Type here to search" />
    </SearchBox>
    <TaskButton aria-label="Task View">
      <svg width="17" height="16" viewBox="0 0 17 16"><path d="M1.500 0v3.500h10V0M1.500 16v-3.500h10V16M1.500 5.500h10v5h-10zM14.500 0v4M14.500 8v8" stroke="#fff" fill="none" /><path d="M13.500 5h3v3h-3z" fill="#fff" /></svg>
    </TaskButton>
    <TaskApps>
      <TaskButton aria-label="Microsoft Edge"><EdgeArt size={24} /></TaskButton>
      <TaskButton aria-label="File Explorer">
        <svg width="24" height="24" viewBox="0 0 24 24">
          <path d="M1 3h8l2 2h11v16H1z" fill="#eea92a" />
          <path d="M2.500 5h18v3h-18z" fill="#fff3c4" />
          <path d="M1 8h22v14H1z" fill="#ffd75e" />
          <path d="M5 14h14v8h-4v-4H9v4H5z" fill="#3f9ee0" />
        </svg>
      </TaskButton>
      <TaskButton aria-label="Firefox"><FirefoxArt size={24} /></TaskButton>
      <TaskButton aria-label="WinRAR" $active><RarArt size={24} /></TaskButton>
    </TaskApps>
    <Tray>
      <TrayButton aria-label="Show hidden icons">
        <svg width="12" height="8" viewBox="0 0 12 8"><path d="m.7 7 5.300-5.500L11.300 7" stroke="#fff" strokeWidth="1.300" fill="none" /></svg>
      </TrayButton>
      <TrayButton aria-label="Meet Now">
        <svg width="13" height="16" viewBox="0 0 13 16"><path d="M2 5h6v6H2zM8 8l3-2v4.500L8 9M2 2.500q4.500-3.500 9 0M2 13.500q4.500 3.500 9 0" stroke="#fff" strokeWidth="1.200" fill="none" /></svg>
      </TrayButton>
      <TrayButton aria-label="Network">
        <svg width="17" height="14" viewBox="0 0 17 14"><path d="M6 1.500h10v8H4.500V7M10.500 9.500v3.500M7 13.500h7M.5.500h4v3h-4zM2.500 3.500v4" stroke="#fff" strokeWidth="1.200" fill="none" /></svg>
      </TrayButton>
      <TrayButton aria-label="Volume">
        <svg width="17" height="14" viewBox="0 0 17 14"><path d="M.6 4.500h2.600L6.500 1.500v11L3.200 9.500H.6zM8.500 5q1.500 2 0 4M10.800 3.300q2.800 3.700 0 7.400M13 1.500q4.400 5.500 0 11" stroke="#fff" strokeWidth="1.100" fill="none" /></svg>
      </TrayButton>
      <Clock><span>7:37 AM</span><span>5/20/2025</span></Clock>
      <NotifyButton aria-label="Notifications">
        <svg width="17" height="16" viewBox="0 0 17 16"><path d="M.6.600h15.800v11.800h-5.200L8.500 15.200l-2.700-2.800H.6z" stroke="#fff" strokeWidth="1.200" fill="none" /></svg>
      </NotifyButton>
    </Tray>
  </Taskbar>
);

export default function App() {
  return (
    <Screen>
      <GlobalStyle />
      <Desktop>
        <LightRays viewBox="0 0 1280 680" preserveAspectRatio="none" aria-hidden="true">
          <defs>
            <linearGradient id="ray" x1="0" y1="0" x2="1" y2="0"><stop offset="0" stopColor="#4cc8ff" stopOpacity="0" /><stop offset="1" stopColor="#4cc8ff" stopOpacity=".3" /></linearGradient>
          </defs>
          <path d="M190 0 665 135H658L190 4z" fill="url(#ray)" />
        </LightRays>
        <IconGrid>
          {desktopItems.map((d) => (
            <DesktopIcon key={d.label}>
              <IconArt>{d.art}{d.shortcut && <Shortcut />}</IconArt>
              <IconLabel>{d.label}</IconLabel>
            </DesktopIcon>
          ))}
        </IconGrid>
        <ArchiveWindow />
        <Brand>
          <span>ANY</span>
          <svg width="54" height="60" viewBox="0 0 54 60">
            <path d="M9 7H3v47h6" stroke="#cfe0ff" strokeWidth="3.500" fill="none" />
            <path d="M11 46V3l40 25L12 56" stroke="#cfe0ff" strokeWidth="4" fill="none" strokeLinejoin="round" />
            <path d="M12 46 44 29 17 12" stroke="#cfe0ff" strokeWidth="3" fill="none" />
          </svg>
          <span>RUN</span>
        </Brand>
        <BuildInfo>
          <div>Test Mode</div>
          <div>Windows 10 Pro</div>
          <div>Build 19041.vb_release.191206-1406</div>
        </BuildInfo>
      </Desktop>
      <TaskbarSection />
    </Screen>
  );
}
